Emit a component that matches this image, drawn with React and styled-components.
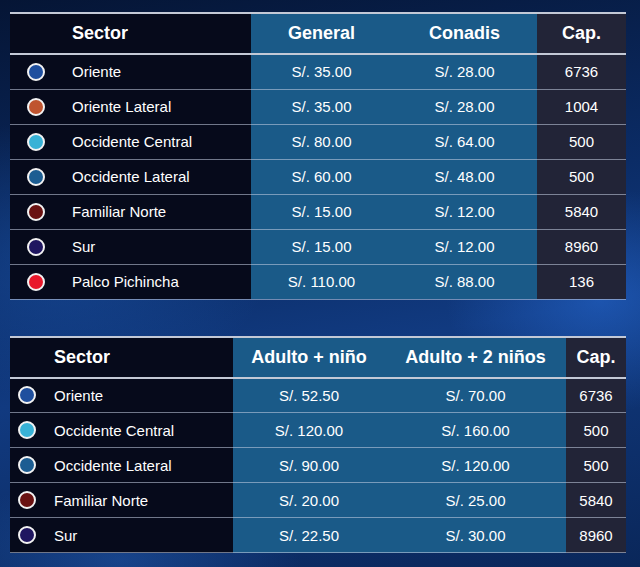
import React from 'react';
import styled, { createGlobalStyle } from 'styled-components';

const GlobalStyle = createGlobalStyle`
  html, body {
    margin: 0;
    padding: 0;
  }
  body {
    font-family: "Liberation Sans", Arial, sans-serif;
    background: #0a2550;
  }
`;

const Page = styled.main`
  width: 640px;
  height: 567px;
  overflow: hidden;
  box-sizing: border-box;
  padding: 12px 14px 0 10px;
  display: flex;
  flex-direction: column;
  gap: 36px;
  background:
    radial-gradient(ellipse 220px 160px at 600px 300px, rgba(40, 110, 220, 0.5), transparent 70%),
    radial-gradient(ellipse 300px 200px at 60px 260px, rgba(30, 90, 180, 0.45), transparent 70%),
    radial-gradient(ellipse 260px 120px at 120px 560px, rgba(40, 100, 190, 0.4), transparent 70%),
    linear-gradient(170deg, #051535 0%, #0b2c66 40%, #113a80 60%, #0a275a 100%);
`;

const Table = styled.table`
  width: 616px;
  border-collapse: collapse;
  table-layout: fixed;
  color: #fff;
`;

const HeadRow = styled.tr`
  height: 41px;
  border-top: 2px solid #c3c9d6;
  border-bottom: 2px solid #c3c9d6;
`;

const Row = styled.tr`
  height: 35px;
  border-bottom: 1px solid rgba(200, 210, 230, 0.55);
`;

const tones = {
  dark: '#060a1b',
  blue: '#1a5a88',
  cap: '#222437',
};

const Th = styled.th`
  padding: 0;
  font-size: 18px;
  font-weight: 700;
  text-align: ${(p) => (p.$left ? 'left' : 'center')};
  padding-left: ${(p) => p.$indent || 0}px;
  background: ${(p) => tones[p.$tone]};
`;

const Td = styled.td`
  padding: 0;
  font-size: 15px;
  text-align: center;
  background: ${(p) => tones[p.$tone]};
`;

const SectorCell = styled.div`
  display: flex;
  align-items: center;
  padding-left: ${(p) => p.$indent}px;
  gap: ${(p) => p.$gap}px;
`;

const Dot = styled.span`
  width: 14px;
  height: 14px;
  border-radius: 50%;
  border: 2px solid #f2f2f2;
  background: ${(p) => p.$color};
  flex: none;
`;

const colors = {
  'Oriente': '#1f4f9e',
  'Oriente Lateral': '#bf5430',
  'Occidente Central': '#38b2d6',
  'Occidente Lateral': '#1c5d92',
  'Familiar Norte': '#6a1212',
  'Sur': '#1f1660',
  'Palco Pichincha': '#e8182b',
};

const general = [
  ['Oriente', '35.00', '28.00', '6736'],
  ['Oriente Lateral', '35.00', '28.00', '1004'],
  ['Occidente Central', '80.00', '64.00', '500'],
  ['Occidente Lateral', '60.00', '48.00', '500'],
  ['Familiar Norte', '15.00', '12.00', '5840'],
  ['Sur', '15.00', '12.00', '8960'],
  ['Palco Pichincha', '110.00', '88.00', '136'],
];

const family = [
  ['Oriente', '52.50', '70.00', '6736'],
  ['Occidente Central', '120.00', '160.00', '500'],
  ['Occidente Lateral', '90.00', '120.00', '500'],
  ['Familiar Norte', '20.00', '25.00', '5840'],
  ['Sur', '22.50', '30.00', '8960'],
];

function PriceTable({ widths, heads, rows, indent, gap }) {
  return (
    <Table>
      <colgroup>
        {widths.map((w, i) => (
          <col key={i} style={{ width: w }} />
        ))}
      </colgroup>
      <thead>
        <HeadRow>
          <Th $tone="dark" $left $indent={indent + 18 + gap}>
            Sector
          </Th>
          <Th $tone="blue">{heads[0]}</Th>
          <Th $tone="blue">{heads[1]}</Th>
          <Th $tone="cap">Cap.</Th>
        </HeadRow>
      </thead>
      <tbody>
        {rows.map(([name, a, b, cap]) => (
          <Row key={name}>
            <Td $tone="dark">
              <SectorCell $indent={indent} $gap={gap}>
                <Dot $color={colors[name]} />
                {name}
              </SectorCell>
            </Td>
            <Td $tone="blue">S/. {a}</Td>
            <Td $tone="blue">S/. {b}</Td>
            <Td $tone="cap">{cap}</Td>
          </Row>
        ))}
      </tbody>
    </Table>
  );
}

export default function App() {
  return (
    <>
      <GlobalStyle />
      <Page>
        <PriceTable
          widths={[241, 141, 145, 89]}
          heads={['General', 'Conadis']}
          rows={general}
          indent={17}
          gap={27}
        />
        <PriceTable
          widths={[223, 152, 181, 60]}
          heads={['Adulto + niño', 'Adulto + 2 niños']}
          rows={family}
          indent={8}
          gap={18}
        />
      </Page>
    </>
  );
}
